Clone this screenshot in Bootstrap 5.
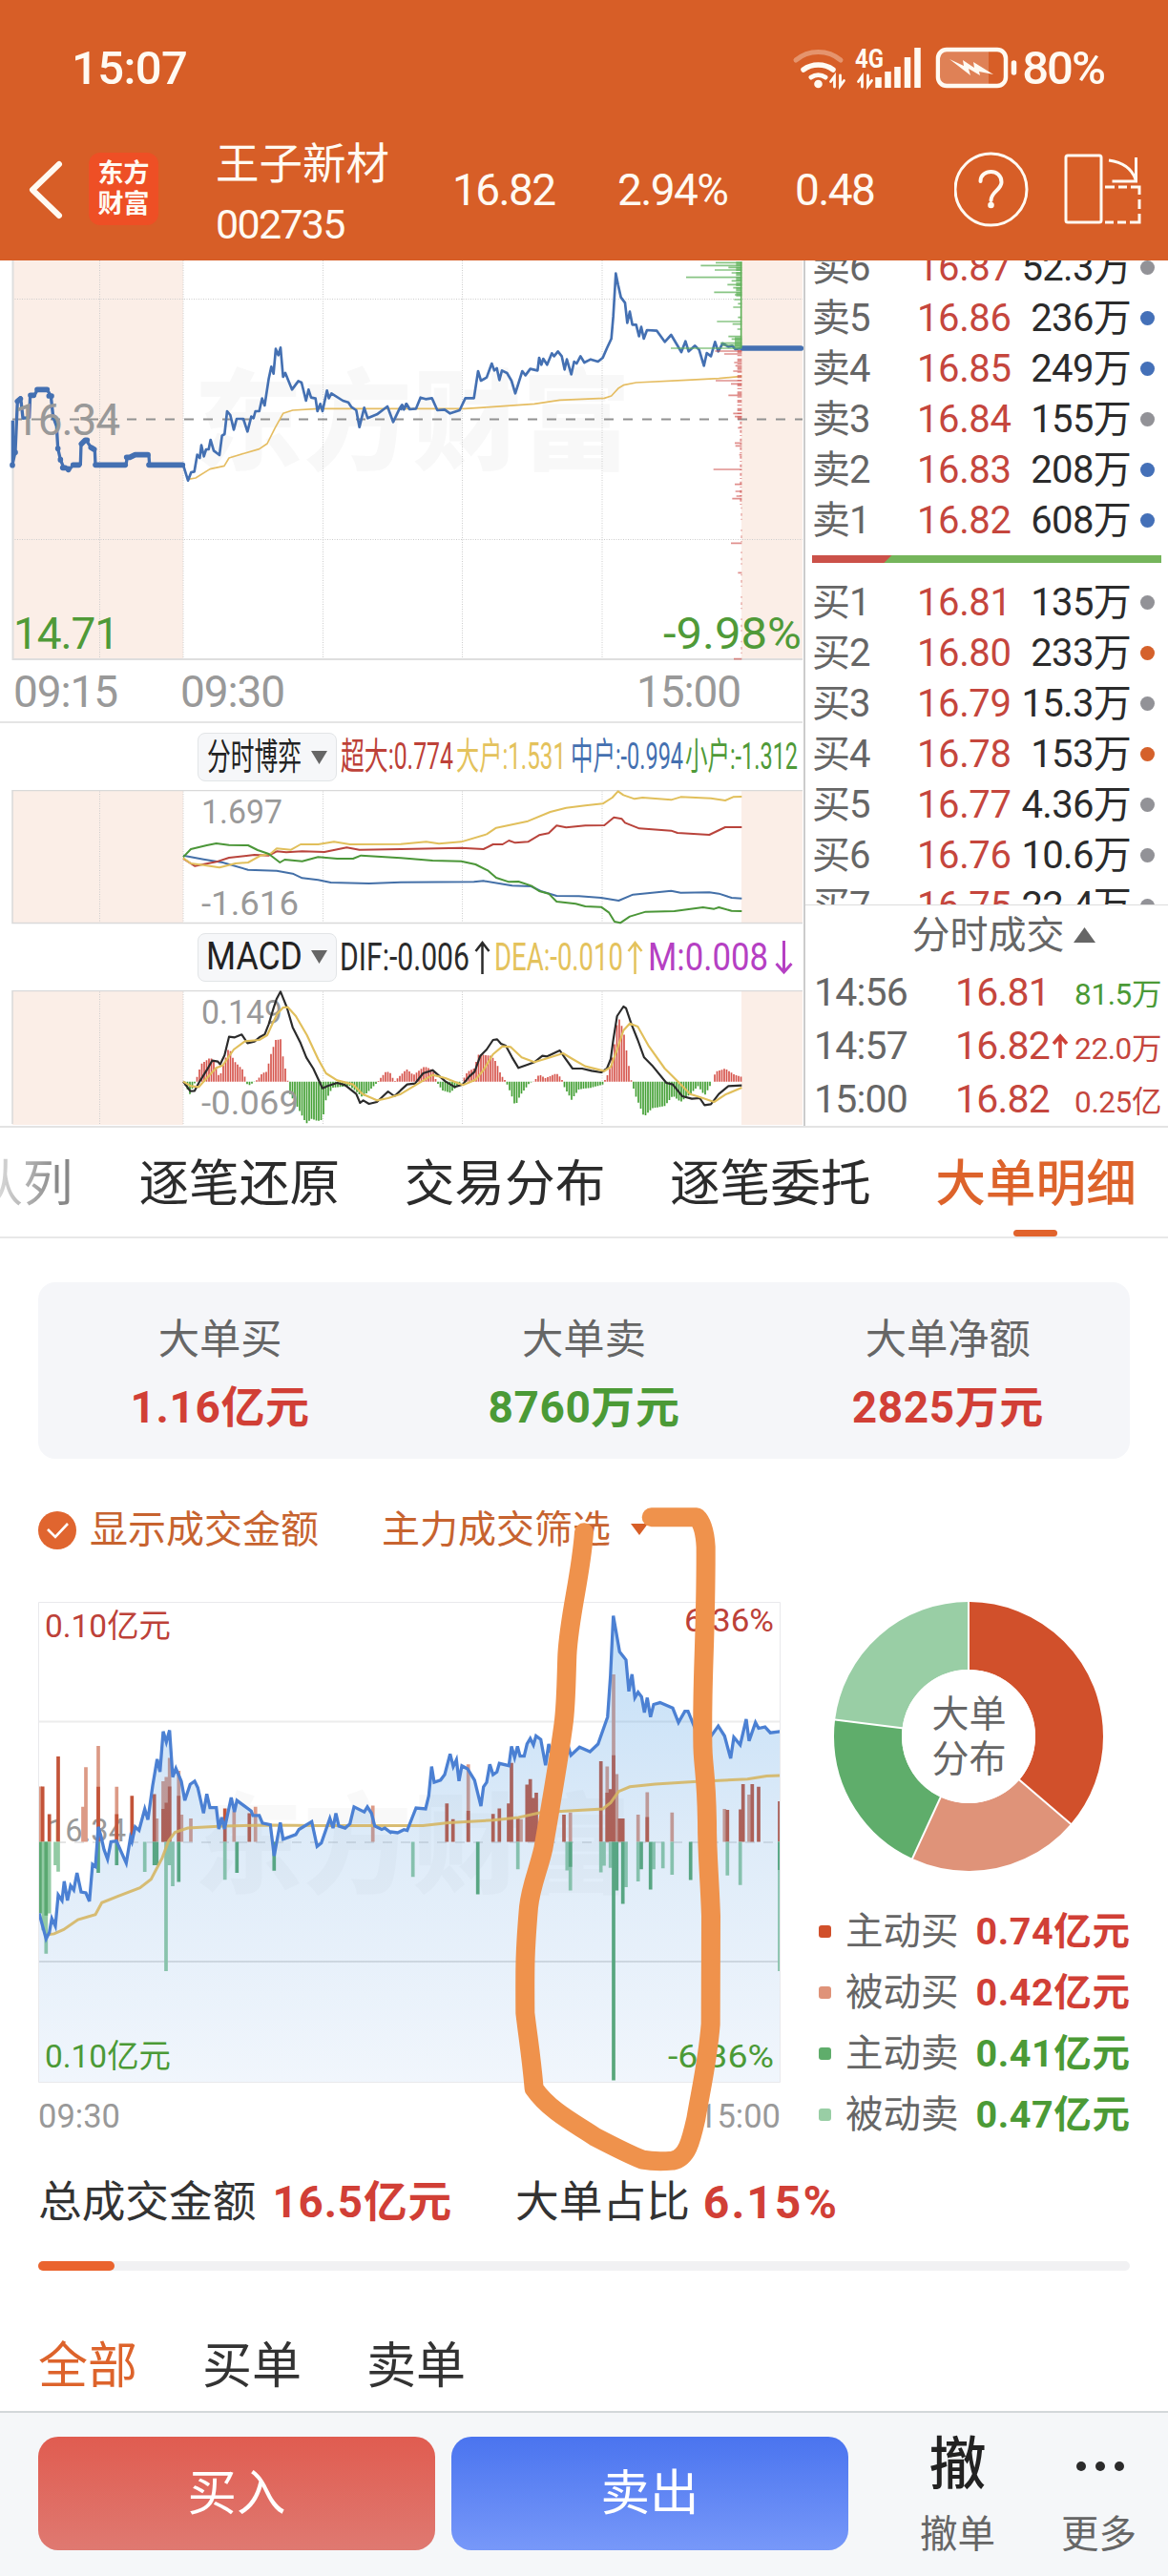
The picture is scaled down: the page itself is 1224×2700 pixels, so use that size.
<!DOCTYPE html>
<html lang="zh-CN">
<head>
<meta charset="utf-8">
<meta name="viewport" content="width=device-width, initial-scale=1">
<title>王子新材 002735</title>
<link href="https://cdn.jsdelivr.net/npm/bootstrap@5.3.0/dist/css/bootstrap.min.css" rel="stylesheet">
<style>
body{font-family:Roboto,"Noto Sans CJK SC",sans-serif;line-height:1;color:#2b2b2b;background:#fff;width:1224px;overflow-x:hidden}
svg{display:block;flex:none;overflow:hidden}
.ind-row svg{overflow:visible}
.app{height:2700px;width:1224px;overflow:hidden}
.top-area{background:#d75e27;color:#fffaf2;height:273px}
.status-row{height:143px;padding-left:75px}
.clock{font-size:49px;font-weight:500;letter-spacing:-.6px}
.nav-row{height:112px}
.logo-box{width:73px;height:76px;border-radius:12px;background:#ee4f25;font-size:27px;font-weight:700;line-height:32px;margin-left:24px;margin-bottom:2px}
.stock-box{width:248px;padding-left:60px;padding-top:8px}
.stock-name{font-size:45.5px;height:64px;line-height:46px;white-space:nowrap;padding-top:1px}
.stock-code{font-size:43px;letter-spacing:-1.7px;line-height:44px}
.quote{font-size:46px;letter-spacing:-1.6px}
.left-col{width:842px}
.right-col{width:382px;border-left:2px solid #ccc;height:907px}
.axis-row{height:66px;padding:2px 65px 0 14px;font-size:46px;color:#999;letter-spacing:-1.1px;border-bottom:2px solid #e4e4e4;margin-right:1px}
.ind-row{height:70px;padding-left:207px}
.ind-chip{width:146px;height:51px;border:1px solid #e2e5e7;border-radius:8px;background:#f6f7f9}
.book{height:675px;overflow:hidden}
.book-line{height:53px;font-size:40px;padding-left:7px}
.b-name{width:110px;color:#666;font-size:40px;letter-spacing:-1px}
.b-price{color:#c5463d;width:103px;letter-spacing:-.4px}
.b-vol{width:121px;text-align:right;letter-spacing:-.7px;white-space:nowrap;font-size:40px}
.dot{width:15px;height:15px;border-radius:50%;margin-left:10px;margin-bottom:1px}
.force-bar{height:8px;margin:10px 7px 15px 7px;background:linear-gradient(135deg,#cb5149 58.500px,#75b55b 59.500px)}
.deal-head{height:63px;border-top:1px solid #ddd;color:#666;font-size:40px;padding:2px 0 0 37px}
.deal{height:56.3px;font-size:41px;padding:2px 7px 0 9px}
.deal span:nth-child(1){width:148px;color:#666;letter-spacing:-.8px}
.deal span:nth-child(2){width:100px;color:#c5463d;letter-spacing:-.8px}
.deal span:last-child{font-size:31.5px;margin-left:auto;padding-top:6px;letter-spacing:-.4px}
.menu-tabs{height:118px;border-top:2px solid #e3e3e3;border-bottom:2px solid #e8e8e8;font-size:52.7px;white-space:nowrap}
.menu-tabs div{height:114px;line-height:118px;margin-right:67.500px}
.menu-tabs .faded{background:linear-gradient(90deg,#eee 10px,#888 90px);-webkit-background-clip:text;color:transparent;margin-left:-29px;margin-right:69px}
.tab-on{color:#dd632b;position:relative;font-weight:500}
.tab-on::after{content:"";position:absolute;left:82px;bottom:0;width:46px;height:7px;border-radius:4px;background:#e1632c}
.sum-card{margin:46px 40px 0;height:185px;border-radius:18px;background:#f5f6f9;padding-top:27px}
.sum-card .lbl{font-size:43.3px;color:#666;line-height:68px}
.sum-card .amt{font-size:46px;font-weight:700;line-height:72px;letter-spacing:.6px}
.up{color:#d13f36}.down{color:#4b9a36}
.opt-row{height:72px;padding:2px 40px 0;margin-top:38px;font-size:40px;color:#c7632f}
.big-chart{width:778px;margin-left:40px}
.legend-line{height:63.9px;font-size:39.5px;color:#666;padding:4px 0 0 18px}
.legend-line i{width:13px;height:13px;border-radius:3px;margin-right:15px}
.legend-line b{font-size:39.5px;margin-left:18px;letter-spacing:.6px}
.axis2{font-size:34.5px;color:#999;width:778px;margin-left:40px;height:56px}
.total-row{height:100px;padding:4px 0 0 40px;font-size:45.7px;color:#333;margin-top:11px}
.thin-bar{height:10px;margin:13px 40px 0;border-radius:5px;background:#f1f1f3}
.filter-row{height:147px;padding-left:40px;padding-top:75px;font-size:52px;color:#333}
.bottom-bar{height:173px;background:#f5f7f9;border-top:2px solid #d3d8da;padding:25px 0 0 40px}
.trade{width:416px;height:119px;border-radius:21px;color:#fff;font-size:51.5px;padding:0;border:0;line-height:1}
.buy{background:linear-gradient(#e05c50,#df7971)}
.sell{background:linear-gradient(#4a74ef,#7798f9)}
.foot-item{height:119px;font-size:39.5px;color:#666}
.hand{position:absolute;left:0;top:1560px;pointer-events:none}
</style>
<script src="https://cdn.jsdelivr.net/npm/bootstrap@5.3.0/dist/js/bootstrap.bundle.min.js"></script>
</head>
<body>
<div class="app position-relative d-flex flex-column">
<header class="top-area flex-shrink-0">
 <div class="status-row d-flex align-items-center">
  <span class="clock">15:07</span>
  <svg class="ms-auto" width="240" height="60" viewBox="826 42 240 60" fill="none" stroke="#fffaf2" stroke-linecap="round">
   <path d="M832 63a34 31 0 0 1 47 0" stroke-width="5" opacity=".35"/>
   <path d="M840 73a24 21 0 0 1 31 0" stroke-width="5.500"/><path d="M848 81a13 12 0 0 1 15 0" stroke-width="5"/>
   <circle cx="855.500" cy="88" r="4.300" fill="#fffaf2" stroke="none"/>
   <path d="M872.500 91V80l-4 5.500M878.500 79v11l4-5.500" stroke-width="2.800"/>
   <path d="M901.500 91V80l-4 5.500M907.500 79v11l4-5.500" stroke-width="2.800"/>
   <text x="894" y="71" font-size="27" font-weight="700" fill="#fffaf2" stroke="none" textLength="30" lengthAdjust="spacingAndGlyphs">4G</text>
   <path d="M918.500 81v11M928.500 75v17M938.500 70v22M949 60v32M959.500 50v42" stroke-width="6.500" stroke-linecap="butt"/>
   <rect x="981" y="52" width="71" height="38" rx="9" stroke-width="4.500"/><path d="M984 54h50v34h-50z" fill="#fff" opacity=".22" stroke="none"/>
   <path d="M1060.500 66v10" stroke-width="5.500"/>
   <path d="M993 62l15 7-1-6 12 8-1-6 21 13-15-3 1 4-12-7 2 7z" fill="#fffaf2" stroke="none"/>
  </svg>
  <span class="clock" style="margin-left:3px;margin-right:67px;letter-spacing:-2px">80%</span>
 </div>
 <div class="nav-row d-flex align-items-center">
  <svg width="69" height="76" viewBox="0 161 69 76" fill="none" stroke="#fffaf2" stroke-width="6" stroke-linecap="round"><path d="M62 172L34 199L62 226" stroke-linejoin="round"/></svg>
  <div class="logo-box d-flex flex-column justify-content-center text-center"><span>东方</span><span>财富</span></div>
  <div class="stock-box"><div class="stock-name">王子新材</div><div class="stock-code">002735</div></div>
  <span class="quote" style="width:173px;margin-left:60px">16.82</span>
  <span class="quote" style="width:186px">2.94%</span>
  <span class="quote">0.48</span>
  <svg class="ms-auto" width="224" height="80" viewBox="1000 159 224 80" fill="none" stroke="#fffaf2" stroke-width="3">
   <circle cx="1038.500" cy="198.500" r="37.500"/><path d="M1027.500 190c0-13 22-14 22 1 0 8-11 10-11 19" stroke-width="4" stroke-linecap="round"/><circle cx="1038.500" cy="215" r="3.300" fill="#fffaf2" stroke="none"/>
   <rect x="1117" y="163" width="37" height="70" rx="2"/>
   <path d="M1162 168q22 3 28 20M1190.500 165v25h-25M1158 196h10m4 0h9m4 0h9v8m0 5v10m0 5v9h-10m-4 0h-9m-4 0h-9"/>
  </svg>
 </div>
</header>

<section class="d-flex flex-shrink-0" style="height:907px">
 <div class="left-col">
  <svg width="842" height="419" viewBox="0 273 842 419">
   <path d="M13 273h179v418H13zM777 273h64v418h-64z" fill="#fbeee7"/>
   <text x="203" y="483" font-size="114" font-weight="900" fill="#f8f8f8" textLength="458">东方财富</text>
   <path d="M104.500 273v418M192 273v418M338.500 273v418M484.500 273v418M631 273v418M13 313.500h828M13 565.500h828" stroke="#ccc" stroke-dasharray="1 1.500" fill="none"/>
   <path d="M13.500 273v418H841" fill="none" stroke="#dedede" stroke-width="2"/>
   <path d="M13 439.500h828" stroke="#929292" stroke-width="2" stroke-dasharray="10 10"/>
   <g transform="translate(0 265) scale(.333333)" fill="none" stroke-linejoin="round">
    <polyline stroke="#e5bd62" stroke-width="5" points="591,712 615,708 660,680 705,670 720,645 770,630 815,617 840,600 865,550 890,505 920,495 1000,490 1460,490 1540,485 1680,475 1760,463 1900,457 1922,450 1945,425 1960,416 2000,408 2160,400 2260,395 2332,388"/>
    <path stroke="#4470b2" stroke-width="10" d="M40 667V527M38 670L48 625 55 465 65 455 72 520 92 518 95 448 110 445 118 430 148 430 160 450 167 515 178 545 182 615 190 650 200 675 218 682 230 667 253 665 255 600 270 588 285 610 298 620 300 667H396L400 643 430 634 468 636 470 667 576 667"/>
    <path stroke="#4470b2" stroke-width="17" stroke-linecap="round" d="M39 667v1M48 627v1M55 467l9-8M96 448h10M117 430h31M154 450h8M170 517v1M182 615v1M190 650v1M197 676h8M215 682v-3M230 667h18M256 601l12-12 6 0M286 612l10 6M300 667H394M398 643h10l17-8h40M468 667h106M2334 300h184"/>
    <polyline stroke="#4470b2" stroke-width="8" points="576,667 591,716 601,690 611,688 620,635 628,645 633,605 641,640 648,618 656,618 662,588 672,622 690,636 698,575 706,570 714,498 724,510 735,556 744,522 765,522 778,562 790,515 797,520 803,498 815,498 824,458 832,480 845,395 853,358 860,380 867,302 875,322 882,298 890,390 897,378 918,430 938,403 948,408 962,465 970,430 978,455 992,458 998,498 1007,475 1014,498 1028,433 1034,457 1042,442 1078,465 1095,470 1105,485 1120,495 1130,548 1145,487 1156,520 1185,508 1218,483 1236,532 1256,490 1264,478 1270,492 1277,475 1288,492"/>
    <polyline transform="translate(1260 0)" stroke="#4470b2" stroke-width="8" points="0,495 5,480 10,492 18,475 28,492 48,490 62,455 78,460 98,457 115,495 138,493 155,505 185,495 203,457 230,457 243,372 252,402 270,392 286,348 294,370 302,363 310,400 318,370 334,378 348,402 360,442 382,372 392,385 407,365 430,370 435,330 442,352 448,333 460,352 475,316 482,325 494,310 506,325 515,367 522,335 536,382 545,342 553,348 565,325 577,345 597,335 620,342 635,330 648,300 662,270 668,200 676,65 683,100 692,140 705,157 712,220 720,185 728,226 740,226 749,262 756,233 764,270 774,243 805,245 830,280 850,258 882,312 895,278 905,310 925,292 938,305 953,355 962,315 975,325 988,280 998,310 1012,285 1030,295 1042,292 1052,303 1072,300"/>
    <path stroke="#62b25b" stroke-opacity=".75" stroke-width="5" d="M2250 31h82M2203 40h129M2290 46h42M2247 54h85M2300 63h32M2157 77h175M2300 88h32M2287 100h45M2305 110h27M2245 124h87M2310 132h22M2308 147h24M2320 160h12M2305 171h27M2320 203h12M2254 216h78M2303 224h29M2318 240h14M2290 263h42M2300 271h32M2265 284h67M2270 291h62M2109 300h223"/>
    <path stroke="#62b25b" stroke-opacity=".75" stroke-width="18" stroke-dasharray="13 3" d="M2323 28v110"/><path stroke="#62b25b" stroke-width="5" d="M2330 28v270"/>
    <path stroke="#62b25b" stroke-opacity=".75" stroke-width="22" d="M2321 265v34"/>
    <path stroke="#cf5450" stroke-opacity=".65" stroke-width="5" d="M2248 309h84M2277 318h55M2308 345h24M2312 355h20M2305 372h27M2250 402h82M2298 412h34M2290 448h42M2305 505h27M2310 515h22M2320 550h12M2310 598h22M2312 607h20M2324 635h8M2243 681h89M2310 728h22M2312 750h20M2302 773h30M2315 765h17M2298 913h34M2320 1006h12M2307 1277h25"/>
    <path stroke="#cf5450" stroke-opacity=".65" stroke-width="14" stroke-dasharray="10 5 4 7" d="M2325 306v220"/><path stroke="#cf5450" stroke-opacity=".6" stroke-width="6" stroke-dasharray="9 7 3 8" d="M2329 530v270"/><path stroke="#cf5450" stroke-opacity=".5" stroke-width="4" stroke-dasharray="5 14 8 9 4 30" d="M2331 800v477"/>
   </g>
   <text x="15" y="456" font-size="46" fill="#999" letter-spacing="-1.100">16.34</text>
   <text x="14" y="680" font-size="46" fill="#4f9a38" letter-spacing="-1.100">14.71</text>
   <text x="695" y="680" font-size="46" fill="#4f9a38" textLength="145" lengthAdjust="spacingAndGlyphs">-9.98%</text>
  </svg>
  <div class="axis-row d-flex align-items-center"><span>09:15</span><span style="margin-left:66px">09:30</span><span class="ms-auto">15:00</span></div>
  <div class="ind-row d-flex align-items-center">
   <div class="ind-chip"><svg width="144" height="49" viewBox="208 768 144 49"><text x="217" y="805" font-size="38" fill="#222" textLength="99" lengthAdjust="spacingAndGlyphs">分时博弈</text><path d="M326 786h17l-8.500 14z" fill="#666"/></svg></div>
   <svg width="488" height="50" viewBox="353 767 488 50" font-size="39"><text x="357" y="805" fill="#bd4138" textLength="118" lengthAdjust="spacingAndGlyphs">超大:0.774</text><text x="478" y="805" fill="#e4c25c" textLength="115" lengthAdjust="spacingAndGlyphs">大户:1.531</text><text x="598" y="805" fill="#4470b0" textLength="118" lengthAdjust="spacingAndGlyphs">中户:-0.994</text><text x="718" y="805" fill="#4f9a38" textLength="118" lengthAdjust="spacingAndGlyphs">小户:-1.312</text></svg>
  </div>
  <svg width="842" height="141" viewBox="0 828 842 141">
   <path d="M13 827h179v141H13zM777 827h64v141h-64z" fill="#fbeee7"/>
   <path d="M104.500 827v141M192 827v141M338.500 827v141M484.500 827v141M631 827v141" stroke="#ccc" stroke-dasharray="1 1.500"/>
   <path d="M841 828.500H13V967.500H841" stroke="#d9d9d9" stroke-width="1.500" fill="none"/>
   <text x="211" y="863" font-size="34.500" fill="#999" textLength="85" lengthAdjust="spacingAndGlyphs">1.697</text><text x="211" y="959" font-size="34.500" fill="#999" textLength="102" lengthAdjust="spacingAndGlyphs">-1.616</text>
   <g transform="translate(0 750) scale(.333333)" fill="none" stroke-width="6" stroke-linejoin="round">
    <path stroke="#4470a8" d="M576 440L640 452 700 462 780 485 870 488 920 497 950 511 1000 517 1040 525 1160 528 1260 524 1490 523 1520 520 1610 535 1670 537 1700 552 1750 567 1820 568 1890 573 1945 582 1990 563 2110 551 2140 557 2230 556 2260 560 2300 573 2332 575"/>
    <path stroke="#b9443c" d="M576 450L612 473 680 460 720 447 800 438 845 440 870 427 900 430 950 427 1020 429 1090 415 1130 422 1260 420 1450 416 1520 420 1550 405 1580 405 1600 393 1620 400 1660 397 1695 376 1725 370 1750 346 1780 352 1840 346 1900 345 1930 320 1955 325 1965 337 2010 355 2110 362 2130 369 2230 375 2280 351 2332 351"/>
    <path stroke="#e1bf5b" d="M576 448L600 465 640 470 690 478 740 465 780 462 820 440 850 435 870 418 915 422 945 405 1000 405 1050 397 1100 405 1260 404 1340 397 1380 403 1450 397 1530 373 1560 353 1660 332 1730 303 1780 290 1840 283 1895 277 1925 258 1943 238 1960 250 1995 262 2020 258 2110 265 2140 256 2235 260 2280 267 2305 256 2332 255"/>
    <path stroke="#4b9638" d="M576 445L600 420 650 408 680 402 720 407 780 408 810 423 845 435 880 462 895 453 950 458 1000 445 1060 450 1110 450 1135 440 1260 448 1360 456 1450 458 1495 468 1535 488 1560 510 1600 523 1630 522 1670 535 1695 552 1725 560 1750 585 1810 592 1840 600 1890 602 1915 620 1932 648 1950 652 1980 632 2030 617 2120 615 2210 603 2245 608 2260 603 2300 614 2332 615"/>
   </g>
  </svg>
  <div class="ind-row d-flex align-items-center" style="height:69px">
   <div class="ind-chip"><svg width="144" height="49" viewBox="208 979 144 49"><text x="216" y="1016" font-size="41" fill="#222" textLength="101" lengthAdjust="spacingAndGlyphs">MACD</text><path d="M326 996h17l-8.500 14z" fill="#666"/></svg></div>
   <svg width="488" height="50" viewBox="353 978 488 50" font-size="41" fill="none"><text x="356" y="1016" fill="#2b2b2b" textLength="136" lengthAdjust="spacingAndGlyphs">DIF:-0.006</text><text x="518" y="1016" fill="#e4c25c" textLength="135" lengthAdjust="spacingAndGlyphs">DEA:-0.010</text><text x="679" y="1016" fill="#b540c3" textLength="126" lengthAdjust="spacingAndGlyphs">M:0.008</text><path d="M505.500 1020V987m-7 9l7-9 7 9" stroke="#2b2b2b" stroke-width="2.500"/><path d="M665.500 1020V987m-7 9l7-9 7 9" stroke="#e4c25c" stroke-width="2.500"/><path d="M821.500 985v33m-8-9l8 9 8-9" stroke="#b540c3" stroke-width="3"/></svg>
  </div>
  <svg width="842" height="142" viewBox="0 1038 842 142">
   <path d="M13 1037h179v142H13zM777 1037h64v142h-64z" fill="#fbeee7"/>
   <path d="M104.500 1037v142M192 1037v142M338.500 1037v142M484.500 1037v142M631 1037v142" stroke="#ccc" stroke-dasharray="1 1.500"/>
   <path d="M841 1038.500H13V1178" stroke="#d9d9d9" stroke-width="1.500" fill="none"/>
   <path id="histUp" stroke="#d6554d" stroke-width="1.700"/><path id="histDown" stroke="#44a035" stroke-width="1.700"/>
   <text x="211" y="1073" font-size="34.500" fill="#999" textLength="85" lengthAdjust="spacingAndGlyphs">0.149</text><text x="211" y="1168" font-size="34.500" fill="#999" textLength="102" lengthAdjust="spacingAndGlyphs">-0.069</text>
   <g transform="translate(0 750) scale(.333333)" fill="none" stroke-width="6.500" stroke-linejoin="round">
    <path stroke="#2b2b2b" d="M576 1151L598 1181 612 1180 625 1155 650 1115 667 1085 685 1088 692 1097 706 1068 720 1010 738 1012 760 1003 778 1030 800 1025 818 1010 832 1003 845 970 860 920 870 890 882 868 902 918 920 980 945 1030 963 1075 985 1110 1014 1172 1030 1165 1060 1155 1085 1162 1120 1190 1132 1218 1142 1210 1160 1221 1185 1215 1220 1182 1240 1197 1260 1178 1280 1160 1305 1157 1330 1125 1360 1115 1400 1150 1430 1168 1455 1160 1475 1135 1492 1120 1510 1070 1530 1050 1550 1020 1563 1018 1575 1032 1590 1038 1610 1075 1630 1108 1660 1097 1680 1090 1705 1070 1720 1072 1760 1053 1775 1075 1800 1110 1830 1110 1860 1117 1890 1122 1908 1110 1920 1080 1928 1020 1940 945 1960 915 1968 920 1985 970 2005 1020 2025 1075 2050 1100 2095 1155 2115 1160 2145 1197 2175 1205 2200 1203 2215 1225 2235 1222 2260 1190 2290 1165 2332 1163"/>
    <path stroke="#e1bf5b" d="M576 1151L600 1165 625 1168 650 1140 680 1108 700 1100 735 1050 770 1024 815 1020 840 1005 870 940 890 918 905 917 930 945 965 1005 1000 1080 1025 1125 1060 1147 1110 1160 1140 1190 1185 1210 1220 1203 1260 1190 1310 1160 1360 1130 1400 1140 1455 1162 1495 1145 1520 1115 1550 1065 1580 1040 1605 1042 1640 1075 1680 1090 1720 1078 1770 1062 1800 1080 1840 1103 1900 1118 1920 1105 1940 1050 1960 990 1980 968 2005 978 2040 1040 2090 1110 2130 1150 2170 1190 2210 1203 2245 1215 2280 1192 2332 1170"/>
   </g>
  </svg>
 </div>
 <div class="right-col">
  <div class="book"><div style="margin-top:-19px" id="asks"></div><div class="force-bar"></div><div id="bids"></div></div>
  <div class="deal-head d-flex align-items-center justify-content-center"><span>分时成交</span><svg class="ms-2" width="26" height="20" viewBox="0 0 26 20"><path d="M12.500 1L24 17H1z" fill="#666"/></svg></div>
  <div class="deal d-flex align-items-center"><span>14:56</span><span>16.81</span><span class="down">81.5万</span></div>
  <div class="deal d-flex align-items-center"><span>14:57</span><span>16.82</span><svg width="20" height="30" viewBox="0 0 20 30"><path d="M10 28V5M3 13l7-8 7 8" fill="none" stroke="#cf4137" stroke-width="3.500"/></svg><span style="color:#c5463d">22.0万</span></div>
  <div class="deal d-flex align-items-center"><span>15:00</span><span>16.82</span><span style="color:#c5463d">0.25亿</span></div>
 </div>
</section>

<nav class="menu-tabs d-flex flex-shrink-0">
 <div class="faded">队列</div><div>逐笔还原</div><div>交易分布</div><div>逐笔委托</div><div class="tab-on">大单明细</div>
</nav>

<main class="flex-shrink-0">
 <div class="sum-card d-flex text-center">
  <div class="col-4"><div class="lbl">大单买</div><div class="amt up">1.16亿元</div></div>
  <div class="col-4"><div class="lbl">大单卖</div><div class="amt down">8760万元</div></div>
  <div class="col-4"><div class="lbl">大单净额</div><div class="amt up">2825万元</div></div>
 </div>
 <div class="opt-row d-flex align-items-center">
  <svg width="40" height="40" viewBox="0 0 40 40"><circle cx="20" cy="20" r="20" fill="#e0652f"/><path d="M10 19l8 8L31 13" fill="none" stroke="#fff" stroke-width="2.600"/></svg>
  <span style="margin-left:14px">显示成交金额</span><span style="margin-left:66px">主力成交筛选</span>
  <svg style="margin-left:20px" width="20" height="14" viewBox="0 0 20 14"><path d="M1 0h18l-9 12z" fill="#d75e27"/></svg>
 </div>
 <div class="d-flex" style="margin-top:40px;height:504px">
  <svg class="big-chart" width="778" height="504" viewBox="40 1680 778 504">
   <defs>
    <linearGradient id="areaFill" gradientUnits="userSpaceOnUse" x1="0" y1="1690" x2="0" y2="2184"><stop offset="0" stop-color="#4fa3ec" stop-opacity=".35"/><stop offset=".5" stop-color="#4c95dc" stop-opacity=".18"/><stop offset="1" stop-color="#4c8edb" stop-opacity=".08"/></linearGradient>
   </defs>
   <path d="M40 1805.500h778" stroke="#ececec" stroke-width="2"/><path d="M40 2057h778" stroke="#d6d6d6" stroke-width="1.500"/>
   <path d="M40 1932h778" stroke="#ddd" stroke-width="1.500" stroke-dasharray="10 9"/>
   <text x="203" y="1976" font-size="114" font-weight="900" fill="#333" opacity=".025" textLength="458">东方财富</text>
   <text x="50" y="1931" font-size="33" fill="#999" textLength="82" lengthAdjust="spacingAndGlyphs">16.34</text>
   <g id="bigBars" fill="none" stroke-width="3.700"></g>
   <path id="bigArea" fill="url(#areaFill)"/>
   <path id="bigAvg" fill="none" stroke="#d5b664" stroke-opacity=".9" stroke-width="3"/>
   <path id="bigLine" fill="none" stroke="#4b80d3" stroke-width="3.300"/>
   <path d="M40.500 2183.500V1680.500H817.500V2183.500z" fill="none" stroke="#e9e9ec"/>
   <g font-size="34"><text x="47" y="1717" fill="#bd4138" textLength="132" lengthAdjust="spacingAndGlyphs">0.10亿元</text><text x="47" y="2168" fill="#4b9a36" textLength="132" lengthAdjust="spacingAndGlyphs">0.10亿元</text>
   <text x="717" y="1711" fill="#bd4138" textLength="94" lengthAdjust="spacingAndGlyphs">6.36%</text><text x="700" y="2168" fill="#4b9a36" textLength="111" lengthAdjust="spacingAndGlyphs">-6.36%</text></g>
  </svg>
  <div style="width:406px;margin-left:22px">
   <svg width="366" height="312" viewBox="840 1680 366 312">
    <g fill="none" stroke-width="71" transform="rotate(-90 1015 1821)">
     <circle cx="1015" cy="1821" r="105.500" pathLength="204" stroke="#d1502b" stroke-dasharray="74 130"/>
     <circle cx="1015" cy="1821" r="105.500" pathLength="204" stroke="#df9379" stroke-dasharray="42 162" stroke-dashoffset="-74"/>
     <circle cx="1015" cy="1821" r="105.500" pathLength="204" stroke="#5fad6b" stroke-dasharray="41 163" stroke-dashoffset="-116"/>
     <circle cx="1015" cy="1821" r="105.500" pathLength="204" stroke="#99cea5" stroke-dasharray="47 157" stroke-dashoffset="-157"/>
    </g>
    <g stroke="#fff" stroke-width="2"><path d="M1015 1821V1678"/><path d="M1015 1821V1678" transform="rotate(130.6 1015 1821)"/><path d="M1015 1821V1678" transform="rotate(204.700 1015 1821)"/><path d="M1015 1821V1678" transform="rotate(277.100 1015 1821)"/></g>
    <circle cx="1015" cy="1821" r="70" fill="#fff"/>
    <g font-size="39" fill="#666" text-anchor="middle"><text x="1015.500" y="1811">大单</text><text x="1015.500" y="1858">分布</text></g>
   </svg>
   <div id="legend"></div>
  </div>
 </div>
 <div class="axis2 d-flex justify-content-between align-items-center" style="margin-top:7px"><span>09:30</span><span>15:00</span></div>
 <div class="total-row d-flex align-items-center"><span>总成交金额</span><b class="up" style="margin-left:17px;letter-spacing:.9px">16.5亿元</b><span style="margin-left:66px">大单占比</span><b class="up" style="margin-left:14px;font-size:48px;letter-spacing:2px">6.15%</b></div>
 <div class="thin-bar"><div class="h-100 rounded-pill" style="width:80px;background:#ea642e"></div></div>
 <div class="filter-row d-flex"><span style="color:#dd632b">全部</span><span style="margin-left:68px">买单</span><span style="margin-left:68px">卖单</span></div>
</main>

<footer class="bottom-bar d-flex flex-shrink-0 mt-auto">
 <button class="trade buy">买入</button><button class="trade sell" style="margin-left:17px">卖出</button>
 <div class="foot-item d-flex flex-column align-items-center" style="margin-left:75px"><span style="font-size:60px;color:#222;font-weight:500;line-height:60px">撤</span><span style="margin-top:23px">撤单</span></div>
 <div class="foot-item d-flex flex-column align-items-center" style="margin-left:69px"><svg width="60" height="60" viewBox="0 0 60 60" fill="#2b2b2b"><circle cx="11" cy="31" r="5"/><circle cx="31" cy="31" r="5"/><circle cx="51" cy="31" r="5"/></svg><span style="margin-top:23px">更多</span></div>
</footer>

<svg class="hand" width="1224" height="740" viewBox="0 0 1224 740"><g transform="translate(410 0) scale(.333333 .471939)"><path vector-effect="non-scaling-stroke" fill="none" stroke="#ef924c" stroke-width="20" stroke-linecap="round" stroke-linejoin="round" d="M606 98C595 200 560 280 553 370C550 430 550 470 543 515C530 590 500 710 478 800C462 850 440 880 432 930C420 1030 420 1060 421 1165C430 1220 440 1260 449 1333C500 1385 590 1415 640 1440C700 1462 750 1480 790 1491Q830 1496 885 1493C930 1487 942 1450 958 1400C975 1330 995 1270 1004 1190L1005 950C1000 850 993 820 993 740C990 620 979 620 979 560C976 420 990 330 989 130Q985 80 960 64L818 64"/></g></svg>
</div>

<script>
const dotColors={b:'#4470b8',g:'#929297',o:'#d5612b'};
const line=([n,p,v,c])=>`<div class="book-line d-flex align-items-center"><span class="b-name">${n}</span><span class="b-price">${p}</span><span class="b-vol">${v}万</span><i class="dot" style="background:${dotColors[c]}"></i></div>`;
asks.innerHTML=[['卖6','16.87','52.3','g'],['卖5','16.86','236','b'],['卖4','16.85','249','b'],['卖3','16.84','155','g'],['卖2','16.83','208','b'],['卖1','16.82','608','b']].map(line).join('');
bids.innerHTML=[['买1','16.81','135','g'],['买2','16.80','233','o'],['买3','16.79','15.3','g'],['买4','16.78','153','o'],['买5','16.77','4.36','g'],['买6','16.76','10.6','g'],['买7','16.75','22.4','g']].map(line).join('');
legend.innerHTML=[['主动买','0.74','#d1502b','up'],['被动买','0.42','#df9379','up'],['主动卖','0.41','#5fad6b','down'],['被动卖','0.47','#99cea5','down']].map(([n,v,c,k])=>`<div class="legend-line d-flex align-items-center"><i style="background:${c}"></i><span>${n}</span><b class="${k}">${v}亿元</b></div>`).join('');

// MACD histogram: envelope sampled at a fixed pitch around the zero line
const env=[576,1151,597,1190,615,1150,633,1095,662,1075,676,1095,690,1140,705,1090,720,1042,735,1085,765,1115,773,1151,780,1165,795,1155,810,1145,824,1125,838,1120,853,1060,867,1020,882,1018,890,1075,897,1110,905,1151,912,1190,940,1240,963,1283,978,1268,1000,1275,1015,1270,1022,1215,1045,1170,1100,1165,1140,1200,1160,1180,1185,1155,1200,1135,1215,1118,1228,1125,1240,1151,1255,1135,1278,1112,1300,1130,1335,1103,1360,1115,1372,1150,1390,1178,1415,1186,1450,1155,1470,1120,1490,1110,1505,1065,1545,1070,1560,1090,1575,1130,1590,1150,1605,1185,1620,1228,1635,1195,1665,1155,1680,1149,1695,1128,1715,1140,1750,1125,1765,1140,1775,1170,1797,1208,1820,1175,1860,1170,1895,1160,1915,1120,1930,1050,1943,945,1960,990,1975,1090,1985,1150,2000,1200,2025,1262,2050,1235,2090,1228,2115,1195,2140,1215,2170,1190,2195,1165,2215,1195,2240,1150,2250,1120,2280,1110,2310,1130,2334,1137];
let up='',down='';
for(let x=582,i=0;x<2334;x+=7.5){
 while(env[i+2]<x)i+=2;
 const t=(x-env[i])/(env[i+2]-env[i]),y=env[i+1]+t*(env[i+3]-env[i+1]);
 const d=`M${x/3} 1133.7V${750+y/3}`;
 if(y<1151)up+=d;else down+=d;
}
histUp.setAttribute('d',up);histDown.setAttribute('d',down);

// Large-order chart: morning and afternoon series
const conv=(s,ox,ky)=>s.trim().split(/\s+/).map(p=>{const[a,b]=p.split(',');return(ox+a/3).toFixed(1)+' '+(1560+b*ky).toFixed(1)});
const A=s=>conv(s,0,1/2.24),B=s=>conv(s,410,740/1568);
const price=[...A('123,1000 145,1060 155,1045 163,1012 174,1030 183,957 195,970 202,925 212,970 222,935 232,945 242,905 255,950 270,952 281,972 291,885 300,890 309,797 318,820 327,850 338,873 349,832 366,830 397,882 410,822 415,832 425,797 437,805 455,755 465,780 480,700 494,638 503,668 513,573 523,598 533,570 543,680 553,660 570,690 581,735 598,697 612,690 622,705 640,765 650,720 660,752 680,752 688,802 697,775 706,802 727,728 737,762 745,735 790,760 795,770 815,770 825,788 850,792 862,865 881,787 890,826 930,815 940,803 980,785 997,843 1010,835 1037,777 1047,800 1056,765 1065,795 1085,800 1100,790 1113,750 1145,762 1155,750 1168,765 1178,795 1200,803 1210,800 1228,810'),
...B('0,765 20,767 40,760 50,762 78,712 108,714 118,685 127,620 135,655 155,650 168,638 185,592 195,620 205,605 213,652 222,618 240,625 262,650 282,708 290,665 300,655 310,615 320,638 332,632 340,613 370,618 378,575 388,600 397,575 405,597 418,597 427,570 437,558 447,572 455,552 470,560 485,617 495,570 510,610 530,580 555,572 565,595 592,577 625,587 650,570 680,510 689,420 698,285 718,365 738,383 747,453 757,415 766,467 776,455 787,465 796,500 805,467 815,510 825,482 845,478 885,490 903,522 923,497 933,497 955,535 975,560 1003,555 1028,530 1048,552 1067,602 1077,555 1097,572 1116,515 1125,563 1145,522 1155,535 1175,532 1192,545 1222,542')];
bigLine.setAttribute('d','M'+price.join('L'));
bigArea.setAttribute('d','M'+price.join('L')+'V2184H41Z');
bigAvg.setAttribute('d','M'+[...A('150,1050 170,1048 200,1038 245,1015 300,1003 320,975 370,960 440,940 475,920 510,870 530,830 550,810 590,800 700,795 850,793 1000,794 1228,794'),...B('0,751 100,751 180,745 320,739 400,733 470,722 560,718 665,714 690,700 715,675 750,665 830,659 950,654 1120,648 1180,641 1222,640')].join('L'));
const bars=[
['#dc9a86','126,702 261,750 270,657 309,607 367,703 493,777 513,690 523,680 533,635 562,665 571,768 600,777 736,760 803,750 1172,747','242,615 408,737 563,722 679,620 699,415 709,637 776,727 805,677 883,722 1048,714 1125,682'],
['#c35439','134,702 155,767 183,632 309,703 367,767 415,724 485,720 513,755 523,740 533,702 562,724 707,754 784,765','175,702 194,737 242,718 320,725 340,713 369,702 378,612 398,735 427,660 437,648 447,690 456,678 543,727 659,608 679,678 689,670 699,595 718,735 728,735 805,732 1057,716 1098,715 1106,659 1135,659 1155,665 1221,697'],
['#92caa4','136,1040 145,1095 155,1000 174,887 183,902 455,903 522,1136 533,887 543,936 707,921','68,865 398,848 553,851 563,895 659,855 669,840 689,845 738,888 776,875 825,848 854,846 883,860 1057,862 1097,883 1221,1074'],
['#5aa971','126,1000 145,1005 309,905 367,887 485,887 493,887 562,926 745,905 862,900','272,904 563,843 699,1317 709,895 728,925 786,848 815,893 941,872 1221,850']];
bigBars.innerHTML=bars.map(([c,a,b])=>`<path stroke="${c}" d="${[...A(a),...B(b)].map(p=>{const[x,y]=p.split(' ');return`M${x} 1931.500V${y}`}).join('')}"/>`).join('');
</script>
</body>
</html>
